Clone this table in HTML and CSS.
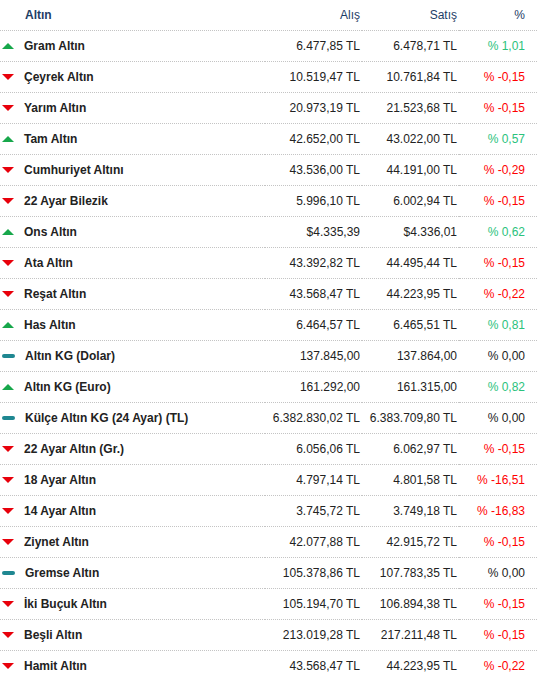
FILE: index.html
```html
<!DOCTYPE html>
<html lang="tr">
<head>
    <meta charset="UTF-8">
    <meta name="viewport" content="width=device-width, initial-scale=1.0">
    <title>Altın Fiyatları</title>
    <link rel="stylesheet" href="styles.css">
</head>
<body>
    <table class="gold-table">
        <thead>
            <tr>
                <th class="name">Altın</th>
                <th class="num">Alış</th>
                <th class="num">Satış</th>
                <th class="pct">%</th>
            </tr>
        </thead>
        <tbody>
            <tr><td class="name"><i class="trend up"></i>Gram Altın</td><td class="num">6.477,85 TL</td><td class="num">6.478,71 TL</td><td class="pct up">% 1,01</td></tr>
            <tr><td class="name"><i class="trend down"></i>Çeyrek Altın</td><td class="num">10.519,47 TL</td><td class="num">10.761,84 TL</td><td class="pct down">% -0,15</td></tr>
            <tr><td class="name"><i class="trend down"></i>Yarım Altın</td><td class="num">20.973,19 TL</td><td class="num">21.523,68 TL</td><td class="pct down">% -0,15</td></tr>
            <tr><td class="name"><i class="trend up"></i>Tam Altın</td><td class="num">42.652,00 TL</td><td class="num">43.022,00 TL</td><td class="pct up">% 0,57</td></tr>
            <tr><td class="name"><i class="trend down"></i>Cumhuriyet Altını</td><td class="num">43.536,00 TL</td><td class="num">44.191,00 TL</td><td class="pct down">% -0,29</td></tr>
            <tr><td class="name"><i class="trend down"></i>22 Ayar Bilezik</td><td class="num">5.996,10 TL</td><td class="num">6.002,94 TL</td><td class="pct down">% -0,15</td></tr>
            <tr><td class="name"><i class="trend up"></i>Ons Altın</td><td class="num">$4.335,39</td><td class="num">$4.336,01</td><td class="pct up">% 0,62</td></tr>
            <tr><td class="name"><i class="trend down"></i>Ata Altın</td><td class="num">43.392,82 TL</td><td class="num">44.495,44 TL</td><td class="pct down">% -0,15</td></tr>
            <tr><td class="name"><i class="trend down"></i>Reşat Altın</td><td class="num">43.568,47 TL</td><td class="num">44.223,95 TL</td><td class="pct down">% -0,22</td></tr>
            <tr><td class="name"><i class="trend up"></i>Has Altın</td><td class="num">6.464,57 TL</td><td class="num">6.465,51 TL</td><td class="pct up">% 0,81</td></tr>
            <tr><td class="name"><i class="trend flat"></i>Altın KG (Dolar)</td><td class="num">137.845,00</td><td class="num">137.864,00</td><td class="pct">% 0,00</td></tr>
            <tr><td class="name"><i class="trend up"></i>Altın KG (Euro)</td><td class="num">161.292,00</td><td class="num">161.315,00</td><td class="pct up">% 0,82</td></tr>
            <tr><td class="name"><i class="trend flat"></i>Külçe Altın KG (24 Ayar) (TL)</td><td class="num">6.382.830,02 TL</td><td class="num">6.383.709,80 TL</td><td class="pct">% 0,00</td></tr>
            <tr><td class="name"><i class="trend down"></i>22 Ayar Altın (Gr.)</td><td class="num">6.056,06 TL</td><td class="num">6.062,97 TL</td><td class="pct down">% -0,15</td></tr>
            <tr><td class="name"><i class="trend down"></i>18 Ayar Altın</td><td class="num">4.797,14 TL</td><td class="num">4.801,58 TL</td><td class="pct down">% -16,51</td></tr>
            <tr><td class="name"><i class="trend down"></i>14 Ayar Altın</td><td class="num">3.745,72 TL</td><td class="num">3.749,18 TL</td><td class="pct down">% -16,83</td></tr>
            <tr><td class="name"><i class="trend down"></i>Ziynet Altın</td><td class="num">42.077,88 TL</td><td class="num">42.915,72 TL</td><td class="pct down">% -0,15</td></tr>
            <tr><td class="name"><i class="trend flat"></i>Gremse Altın</td><td class="num">105.378,86 TL</td><td class="num">107.783,35 TL</td><td class="pct">% 0,00</td></tr>
            <tr><td class="name"><i class="trend down"></i>İki Buçuk Altın</td><td class="num">105.194,70 TL</td><td class="num">106.894,38 TL</td><td class="pct down">% -0,15</td></tr>
            <tr><td class="name"><i class="trend down"></i>Beşli Altın</td><td class="num">213.019,28 TL</td><td class="num">217.211,48 TL</td><td class="pct down">% -0,15</td></tr>
            <tr><td class="name"><i class="trend down"></i>Hamit Altın</td><td class="num">43.568,47 TL</td><td class="num">44.223,95 TL</td><td class="pct down">% -0,22</td></tr>
        </tbody>
    </table>
</body>
</html>
```

FILE: styles.css
```css
body {
    margin: 0;
    background: #fff;
    font-family: "Liberation Sans", Arial, sans-serif;
    font-size: 12px;
    color: #222;
}
.gold-table {
    width: 537px;
    border-collapse: collapse;
    table-layout: fixed;
}
.gold-table th,
.gold-table td {
    height: 30px;
    padding: 0;
    border-bottom: 1px dotted #c4c4c4;
    white-space: nowrap;
    vertical-align: middle;
}
.gold-table th {
    font-weight: normal;
    color: #1d3d66;
    height: 30px;
}
.gold-table th.name {
    font-weight: bold;
    padding-left: 25px;
}
.gold-table .name {
    width: 240px;
    text-align: left;
    font-weight: bold;
    color: #222;
}
.gold-table th.name {
    color: #1d3d66;
}
.gold-table .num {
    width: 95px;
    text-align: right;
    padding-right: 2px;
}
.gold-table .pct {
    text-align: right;
    padding-right: 12px;
}
.pct.up {
    color: #2bc27c;
}
.pct.down {
    color: #f00;
}
.trend {
    display: inline-block;
    width: 13px;
    margin: 0 10px 0 2px;
    vertical-align: middle;
    position: relative;
    top: -1px;
}
.trend.up {
    height: 0;
    border-left: 6.5px solid transparent;
    border-right: 6.5px solid transparent;
    border-bottom: 6px solid #17a74b;
    width: 0;
}
.trend.down {
    height: 0;
    width: 0;
    border-left: 6.5px solid transparent;
    border-right: 6.5px solid transparent;
    border-top: 6px solid #e8000b;
}
.trend.flat {
    height: 4px;
    border-radius: 2px;
    background: #1f8791;
}
```
